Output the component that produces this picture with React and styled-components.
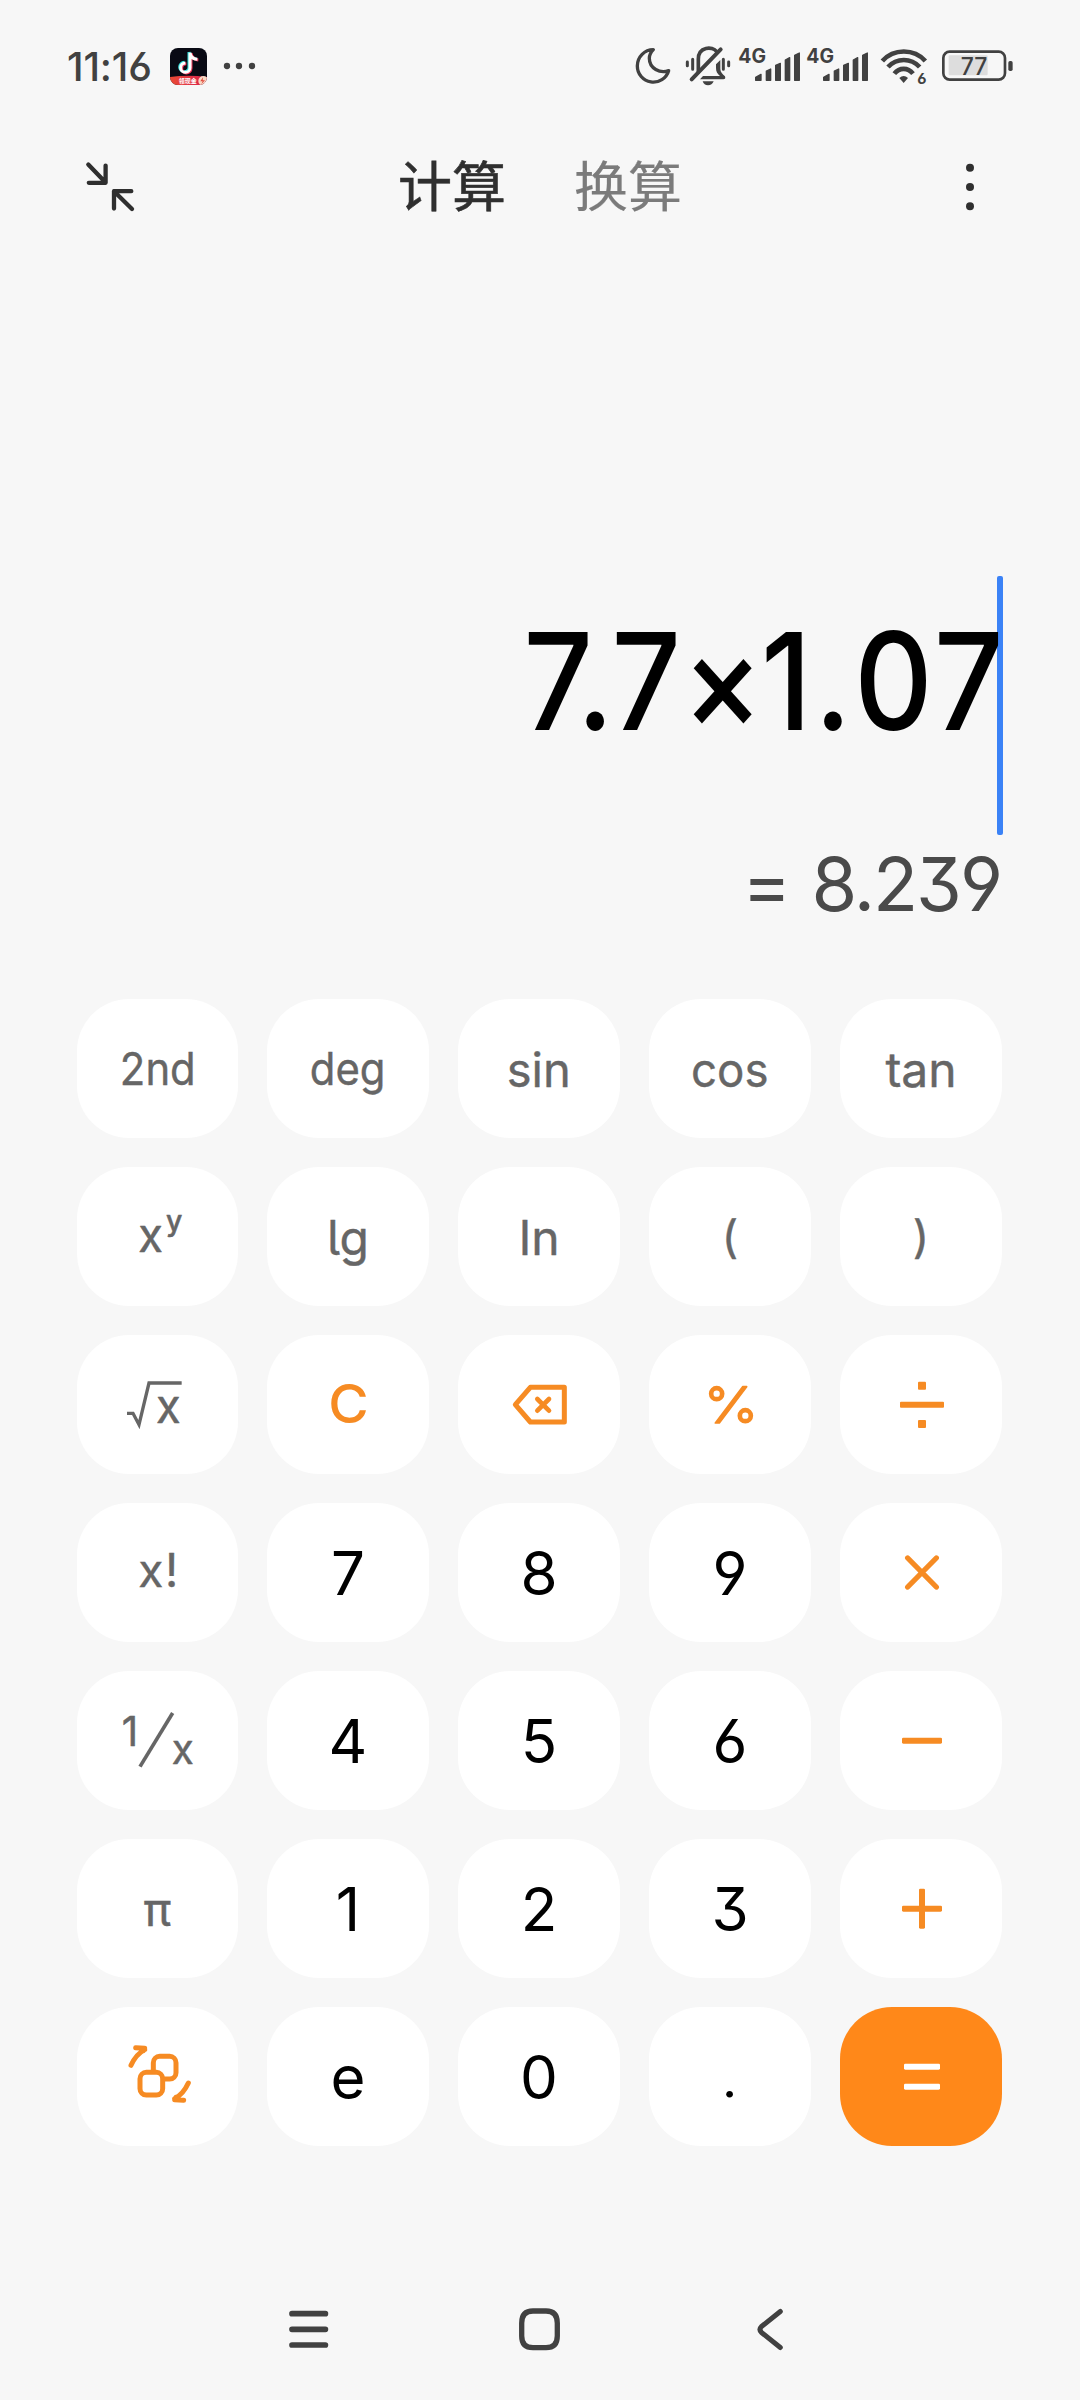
import React from "react";
import styled, { createGlobalStyle } from "styled-components";

const INK = "#414141";
const GREY = "#666666";
const ORANGE = "#f68b23";
const UI = `Inter, "Noto Sans", "Noto Sans CJK SC", sans-serif`;

const GlobalStyle = createGlobalStyle`
  body { margin: 0; background: #f7f7f7; }
  * { box-sizing: border-box; }
`;

const Screen = styled.main`
  width: 1080px;
  height: 2400px;
  background: #f7f7f7;
  display: flex;
  flex-direction: column;
  overflow: hidden;
  font-family: ${UI};
  font-feature-settings: "cv03", "cv04", "cv09";
`;

const StatusBar = styled.header`
  height: 130px;
  padding: 0 67px;
  display: flex;
  justify-content: space-between;
  color: ${INK};
`;

const StatusGroup = styled.div`
  display: flex;
  align-items: center;
  height: 132px;
  gap: ${(p) => p.$gap || 0}px;
  margin-left: ${(p) => p.$before || 0}px;
`;

const Clock = styled.span`
  font-size: 40px;
  font-weight: 500;
  letter-spacing: -0.2px;
  width: 103px;
  white-space: nowrap;
`;

const Drawing = styled.svg`
  display: block;
  flex: none;
  overflow: visible;
`;

const TopBar = styled.nav`
  height: 114px;
  padding: 0 105px 0 86px;
  display: grid;
  grid-template-columns: 312px 1fr 10px;
  align-items: center;
`;

const Tabs = styled.div`
  display: flex;
  gap: 68px;
  padding-bottom: 7px;
`;

const Tab = styled.span`
  font-family: "Noto Sans CJK SC", sans-serif;
  font-size: 54px;
  line-height: 60px;
  font-weight: 400;
  -webkit-text-stroke: ${(p) => (p.$active ? 0.6 : 0.2)}px currentColor;
  color: ${(p) => (p.$active ? "#2f2f2f" : "#7b7b7b")};
`;

const Display = styled.section`
  height: 755px;
  padding: 332px 77px 0 0;
  display: flex;
  flex-direction: column;
  align-items: flex-end;
`;

const Expression = styled.div`
  display: flex;
  height: 259px;
`;

const ExpressionText = styled.span`
  margin-right: -7.4px;
  color: #000;
  font-size: 135px;
  line-height: 210px;
  font-weight: 500;
  white-space: nowrap;
  transform: scaleX(0.9);
  transform-origin: right center;
`;

const Part = styled.span`
  letter-spacing: ${(p) => p.$track}px;
  margin-right: ${(p) => p.$after || 0}px;
`;

const Caret = styled.span`
  width: 6px;
  height: 259px;
  border-radius: 2px;
  background: #3b82f6;
  flex: none;
`;

const Result = styled.div`
  margin-top: 4px;
  padding-right: 2px;
  font-size: 74px;
  line-height: 90px;
  letter-spacing: -2px;
  word-spacing: 3.5px;
  color: #4a4a4a;
  white-space: pre;
`;

const Keypad = styled.section`
  display: grid;
  grid-template-columns: 161px repeat(4, 162px);
  grid-auto-rows: 139px;
  gap: 29px;
  padding-left: 77px;
`;

const Key = styled.button`
  border: 0;
  margin: 0;
  padding: 0;
  border-radius: 52px;
  background: ${(p) => (p.$primary ? "#ff8819" : "#ffffff")};
  color: ${(p) => p.$color || GREY};
  display: flex;
  align-items: center;
  justify-content: center;
  font-family: inherit;
  font-feature-settings: inherit;
  font-weight: ${(p) => p.$weight || 400};
  font-size: ${(p) => p.$size || 48}px;
  line-height: 1;
  -webkit-text-stroke: ${(p) => (p.$color ? 0 : 0.4)}px currentColor;
`;

const Label = styled.span`
  padding-top: ${(p) => p.$down || 0}px;
  padding-bottom: ${(p) => p.$up || 0}px;
  padding-left: ${(p) => p.$right || 0}px;
  letter-spacing: ${(p) => p.$track || 0}px;
  transform: scaleX(${(p) => p.$stretch || 1});
  font-family: ${(p) => (p.$square ? "Roboto, sans-serif" : "inherit")};
  font-feature-settings: ${(p) => (p.$tail ? '"cv05"' : "inherit")};
`;

const NavBar = styled.footer`
  margin-top: auto;
  height: 142px;
  padding: 0 290px 0 289px;
  display: flex;
  justify-content: space-between;
  align-items: center;
`;

/* An icon whose drawing units are `s` times finer than a pixel. */
function Art({ box, s = 3, children, ...rest }) {
  const [x, y, w, h] = box;
  return (
    <Drawing width={w / s} height={h / s} viewBox={`${x} ${y} ${w} ${h}`} fill="none"
      strokeLinecap="round" strokeLinejoin="round" {...rest}>
      {children}
    </Drawing>
  );
}

const AppBadge = () => (
  <Art box={[390, 54, 111, 111]}>
    <defs>
      <clipPath id="badge"><rect x="390" y="54" width="111" height="111" rx="24" /></clipPath>
      <linearGradient id="ribbon" x1="0" x2="1"><stop stopColor="#ea4a35" /><stop offset="1" stopColor="#d8224f" /></linearGradient>
    </defs>
    <g clipPath="url(#badge)">
      <rect x="390" y="54" width="111" height="111" fill="#090a14" />
      <g strokeWidth="9" strokeLinecap="butt">
        <path d="M447 66V111A14 14 0 1 1 433 97M447 66C449 78 457 85 469 86" stroke="#35e0dc" />
        <path d="M453 70V115A14 14 0 1 1 439 101M453 70C455 82 463 89 475 90" stroke="#f0385a" />
        <path d="M450 68V113A14 14 0 1 1 436 99M450 68C452 80 460 87 472 88" stroke="#fff" />
      </g>
      <path d="M390 141Q445 134 501 141V165H390Z" fill="url(#ribbon)" />
      <circle cx="490" cy="153" r="15" fill="#f7d9c4" />
      <path d="M489 142L481 154H488L484 163L495 151H488Z" fill="#e2483c" />
      <text x="416" y="158" fontSize="18" fontWeight="700" fill="#fff" fontFamily="Noto Sans CJK SC">领现金</text>
    </g>
  </Art>
);

const MoreNotices = () => (
  <Art box={[501, 54, 149, 111]} fill={INK}>
    <circle cx="561" cy="108" r="9.5" /><circle cx="597" cy="108" r="9.5" /><circle cx="636" cy="108" r="9.5" />
  </Art>
);

const Moon = () => (
  <Art box={[78, 53, 104, 108]} stroke={INK} strokeWidth="10">
    <path d="M130 58C104 58 82 79 82 107A48 48 0 0 0 176 121C150 130 118 115 118 84C118 74 123 65 130 58Z" />
  </Art>
);

const MutedBell = () => (
  <Art box={[228, 50, 132, 116]} stroke={INK} strokeWidth="9">
    <path d="M265 124V86C265 48 308 47 319 63" strokeWidth="11" />
    <path d="M245 147L332 57" strokeWidth="12" />
    <path d="M331 89V116C331 126 338 131 345 138Q348 147 340 147H270L279 137H330C322 130 318 124 318 112V102Z" fill={INK} stroke="none" />
    <path d="M232 95V106M248 87V117M340 87V117M356 95V106" />
    <path d="M278 153H311Q306 165 294 165T278 153Z" fill={INK} stroke="none" />
  </Art>
);

const Signal = () => (
  <Art box={[387, 50, 184, 116]}>
    <text x="385" y="98" fontSize="59" fontWeight="700" fill={INK} textLength="83" lengthAdjust="spacingAndGlyphs">4G</text>
    <g fill={INK} stroke={INK} strokeWidth="4">
      <path d="M437 141L453 132V150H437Z" />
      <path d="M469 122L482 116V150H469Z" />
      <path d="M497 105L511 99V150H497Z" />
      <path d="M526 89L539 82V150H526Z" />
      <path d="M554 75L568 68V150H554Z" />
    </g>
  </Art>
);

const Wifi = () => (
  <Art box={[813, 50, 139, 116]} stroke={INK} strokeWidth="14" strokeLinecap="butt">
    <path d="M817 92C851 54 912 54 946 92" />
    <path d="M834 110C860 82 903 82 929 110" />
    <path d="M853 130C868 111 894 111 909 130" />
    <path d="M868 143Q881 131 894 143L881 158Z" fill={INK} stroke="none" />
    <text x="922" y="162" fontSize="45" fontWeight="700" fill={INK} stroke="none">6</text>
  </Art>
);

const Battery = () => (
  <Art box={[997, 50, 212, 116]}>
    <rect x="1017" y="75" width="117" height="60" rx="3" fill="#dddddd" />
    <rect x="1001" y="64" width="185" height="84" rx="19" stroke={INK} strokeWidth="8" />
    <rect x="1196" y="92" width="13" height="30" rx="5" fill={INK} />
    <text x="1053" y="134" fontSize="72" fontWeight="500" fill={INK} textLength="80" lengthAdjust="spacingAndGlyphs">77</text>
  </Art>
);

const Shrink = () => (
  <Art s={1} box={[86, 162, 49, 50]} stroke="#2f2f2f" strokeWidth="4.3">
    <path d="M88.3 164.6L105.6 182.6M105.6 165.6V182.8H88.8" />
    <path d="M132 209L114 191.2M114 208.5V191.2H131.3" />
  </Art>
);

const More = () => (
  <Art s={1} box={[965, 160, 10, 54]} fill="#2f2f2f">
    <circle cx="970" cy="167.7" r="4" /><circle cx="970" cy="187" r="4" /><circle cx="970" cy="206.3" r="4" />
  </Art>
);

const keyText = { fill: GREY, fontSize: 140, stroke: GREY, strokeWidth: 1.5 };

const Power = () => (
  <Art box={[51, 559, 483, 417]}>
    <text x="235" y="813" {...keyText} textLength="74" lengthAdjust="spacingAndGlyphs">x</text>
    <text x="318" y="752" {...keyText} fontSize="88" fontWeight="500" textLength="49" lengthAdjust="spacingAndGlyphs">y</text>
  </Art>
);

const Root = () => (
  <Art box={[51, 43, 483, 417]}>
    <path d="M201 278H219L237 312L267 187H365" stroke={GREY} strokeWidth="10" strokeLinecap="butt" strokeLinejoin="miter" />
    <text x="288" y="308" {...keyText} textLength="74" lengthAdjust="spacingAndGlyphs">x</text>
  </Art>
);

const Reciprocal = () => (
  <Art box={[51, 31, 483, 417]}>
    <text x="185" y="256" {...keyText} fontSize="121">1</text>
    <path d="M240 318L338 157" stroke={GREY} strokeWidth="11" strokeLinecap="butt" />
    <text x="335" y="309" {...keyText} fontSize="127" textLength="66" lengthAdjust="spacingAndGlyphs">x</text>
  </Art>
);

const Backspace = () => (
  <Art box={[1194, 43, 486, 417]} stroke={ORANGE} strokeWidth="15">
    <path d="M1366 252L1411 200H1513V304H1411Z" />
    <path d="M1432 235L1467 270M1467 235L1432 270" strokeWidth="14" />
  </Art>
);

const Percent = () => (
  <Art box={[327, 43, 486, 417]} stroke={ORANGE} strokeWidth="14">
    <circle cx="530" cy="219" r="16.5" /><circle cx="616" cy="285" r="16.5" />
    <path d="M526 307L608 198H620L538 307Z" fill={ORANGE} strokeWidth="5" />
  </Art>
);

const Divide = () => (
  <Art box={[900, 43, 486, 417]} fill={ORANGE}>
    <rect x="1134" y="183" width="24" height="24" rx="3" />
    <rect x="1080" y="243" width="132" height="18" rx="3" />
    <rect x="1134" y="298" width="24" height="24" rx="3" />
  </Art>
);

const Times = () => (
  <Art box={[900, 547, 486, 417]} stroke={ORANGE} strokeWidth="16">
    <path d="M1103 712L1189 799M1189 712L1103 799" />
  </Art>
);

const Minus = () => (
  <Art box={[900, 31, 486, 417]} fill={ORANGE}>
    <rect x="1086" y="231" width="120" height="18" rx="4" />
  </Art>
);

const Plus = () => (
  <Art box={[900, 535, 486, 417]} fill={ORANGE}>
    <rect x="1086" y="735" width="120" height="18" rx="4" />
    <rect x="1137" y="684" width="18" height="120" rx="4" />
  </Art>
);

const Equals = () => (
  <Art box={[900, 1039, 486, 417]} fill="#fff">
    <rect x="1092" y="1209" width="108" height="18" rx="4" />
    <rect x="1092" y="1269" width="108" height="18" rx="4" />
  </Art>
);

const Swap = () => (
  <Art box={[51, 1039, 483, 417]} stroke={ORANGE} strokeWidth="15">
    <rect x="280" y="1187" width="68" height="68" rx="19" />
    <rect x="240" y="1235" width="68" height="68" rx="19" fill="#fff" />
    <path d="M213 1214Q228 1181 254 1167M227 1161L254 1163L250 1170" />
    <path d="M385 1267Q370 1300 344 1314M371 1319L344 1317L348 1310" />
  </Art>
);

const keys = [
  { id: "2nd", size: 45, up: 1, stretch: 0.93 },
  { id: "deg", size: 45, up: 1, stretch: 0.93 },
  { id: "sin", down: 2, stretch: 0.98 },
  { id: "cos", down: 2, stretch: 0.95 },
  { id: "tan", down: 2 },

  { id: "pow", art: <Power /> },
  { id: "lg", down: 2, tail: true },
  { id: "In", down: 2 },
  { id: "(", size: 45 },
  { id: ")", size: 45 },

  { id: "root", art: <Root /> },
  { id: "C", size: 53, color: ORANGE, weight: 500, stretch: 1.04 },
  { id: "backspace", art: <Backspace /> },
  { id: "percent", art: <Percent /> },
  { id: "divide", art: <Divide /> },

  { id: "x!", size: 46, up: 5, right: 3, track: 1.5 },
  { id: "7", num: true },
  { id: "8", num: true },
  { id: "9", num: true },
  { id: "multiply", art: <Times /> },

  { id: "reciprocal", art: <Reciprocal /> },
  { id: "4", num: true },
  { id: "5", num: true },
  { id: "6", num: true },
  { id: "subtract", art: <Minus /> },

  { id: "π", size: 46 },
  { id: "1", num: true },
  { id: "2", num: true },
  { id: "3", num: true },
  { id: "add", art: <Plus /> },

  { id: "swap", art: <Swap /> },
  { id: "e", num: true },
  { id: "0", num: true },
  { id: ".", num: true, square: true },
  { id: "equals", art: <Equals />, primary: true },
];

export default function App() {
  return (
    <>
      <GlobalStyle />
      <Screen>
        <StatusBar>
          <StatusGroup>
            <Clock>11:16</Clock>
            <AppBadge />
            <MoreNotices />
          </StatusGroup>
          <StatusGroup>
            <StatusGroup $gap={15}><Moon /><MutedBell /></StatusGroup>
            <StatusGroup $gap={6.7} $before={9}><Signal /><Signal /></StatusGroup>
            <StatusGroup $gap={15} $before={12.7}><Wifi /><Battery /></StatusGroup>
          </StatusGroup>
        </StatusBar>
        <TopBar>
          <Shrink />
          <Tabs><Tab $active>计算</Tab><Tab>换算</Tab></Tabs>
          <More />
        </TopBar>
        <Display>
          <Expression>
            <ExpressionText>
              <Part $track={-1} $after={-1.5}>7.</Part>
              <Part $track={1.3} $after={-3.5}>7×</Part>
              <Part $track={3.2}>1.</Part>
              <Part $track={4.1} $after={-2.5}>07</Part>
            </ExpressionText>
            <Caret />
          </Expression>
          <Result>= 8.239</Result>
        </Display>
        <Keypad>
          {keys.map((k) => (
            <Key key={k.id} aria-label={k.id} $primary={k.primary} $weight={k.weight}
              $size={k.num ? 60 : k.size} $color={k.num ? "#000" : k.color}>
              {k.art || (
                <Label $tail={k.tail} $square={k.square} $up={k.up} $down={k.down} $right={k.right}
                  $track={k.track} $stretch={k.stretch}>
                  {k.id}
                </Label>
              )}
            </Key>
          ))}
        </Keypad>
        <NavBar>
          <Art s={1} box={[289, 2308, 39, 43]} stroke={INK} strokeWidth="5.7">
            <path d="M292 2313.7H325.4M292 2329.3H325.4M292 2345H325.4" />
          </Art>
          <Art s={1} box={[519, 2308, 41, 43]} stroke={INK} strokeWidth="5.3">
            <path d="M533 2311H546Q557.3 2311 557.3 2323V2336Q557.3 2347.7 546 2347.7H533Q521.7 2347.7 521.7 2336V2323Q521.7 2311 533 2311Z" />
          </Art>
          <Art s={1} box={[751, 2308, 39, 43]} stroke={INK} strokeWidth="5">
            <path d="M780.3 2311.5L761.5 2326.5Q758.5 2329.5 761.5 2332.5L780.3 2347.5" />
          </Art>
        </NavBar>
      </Screen>
    </>
  );
}
